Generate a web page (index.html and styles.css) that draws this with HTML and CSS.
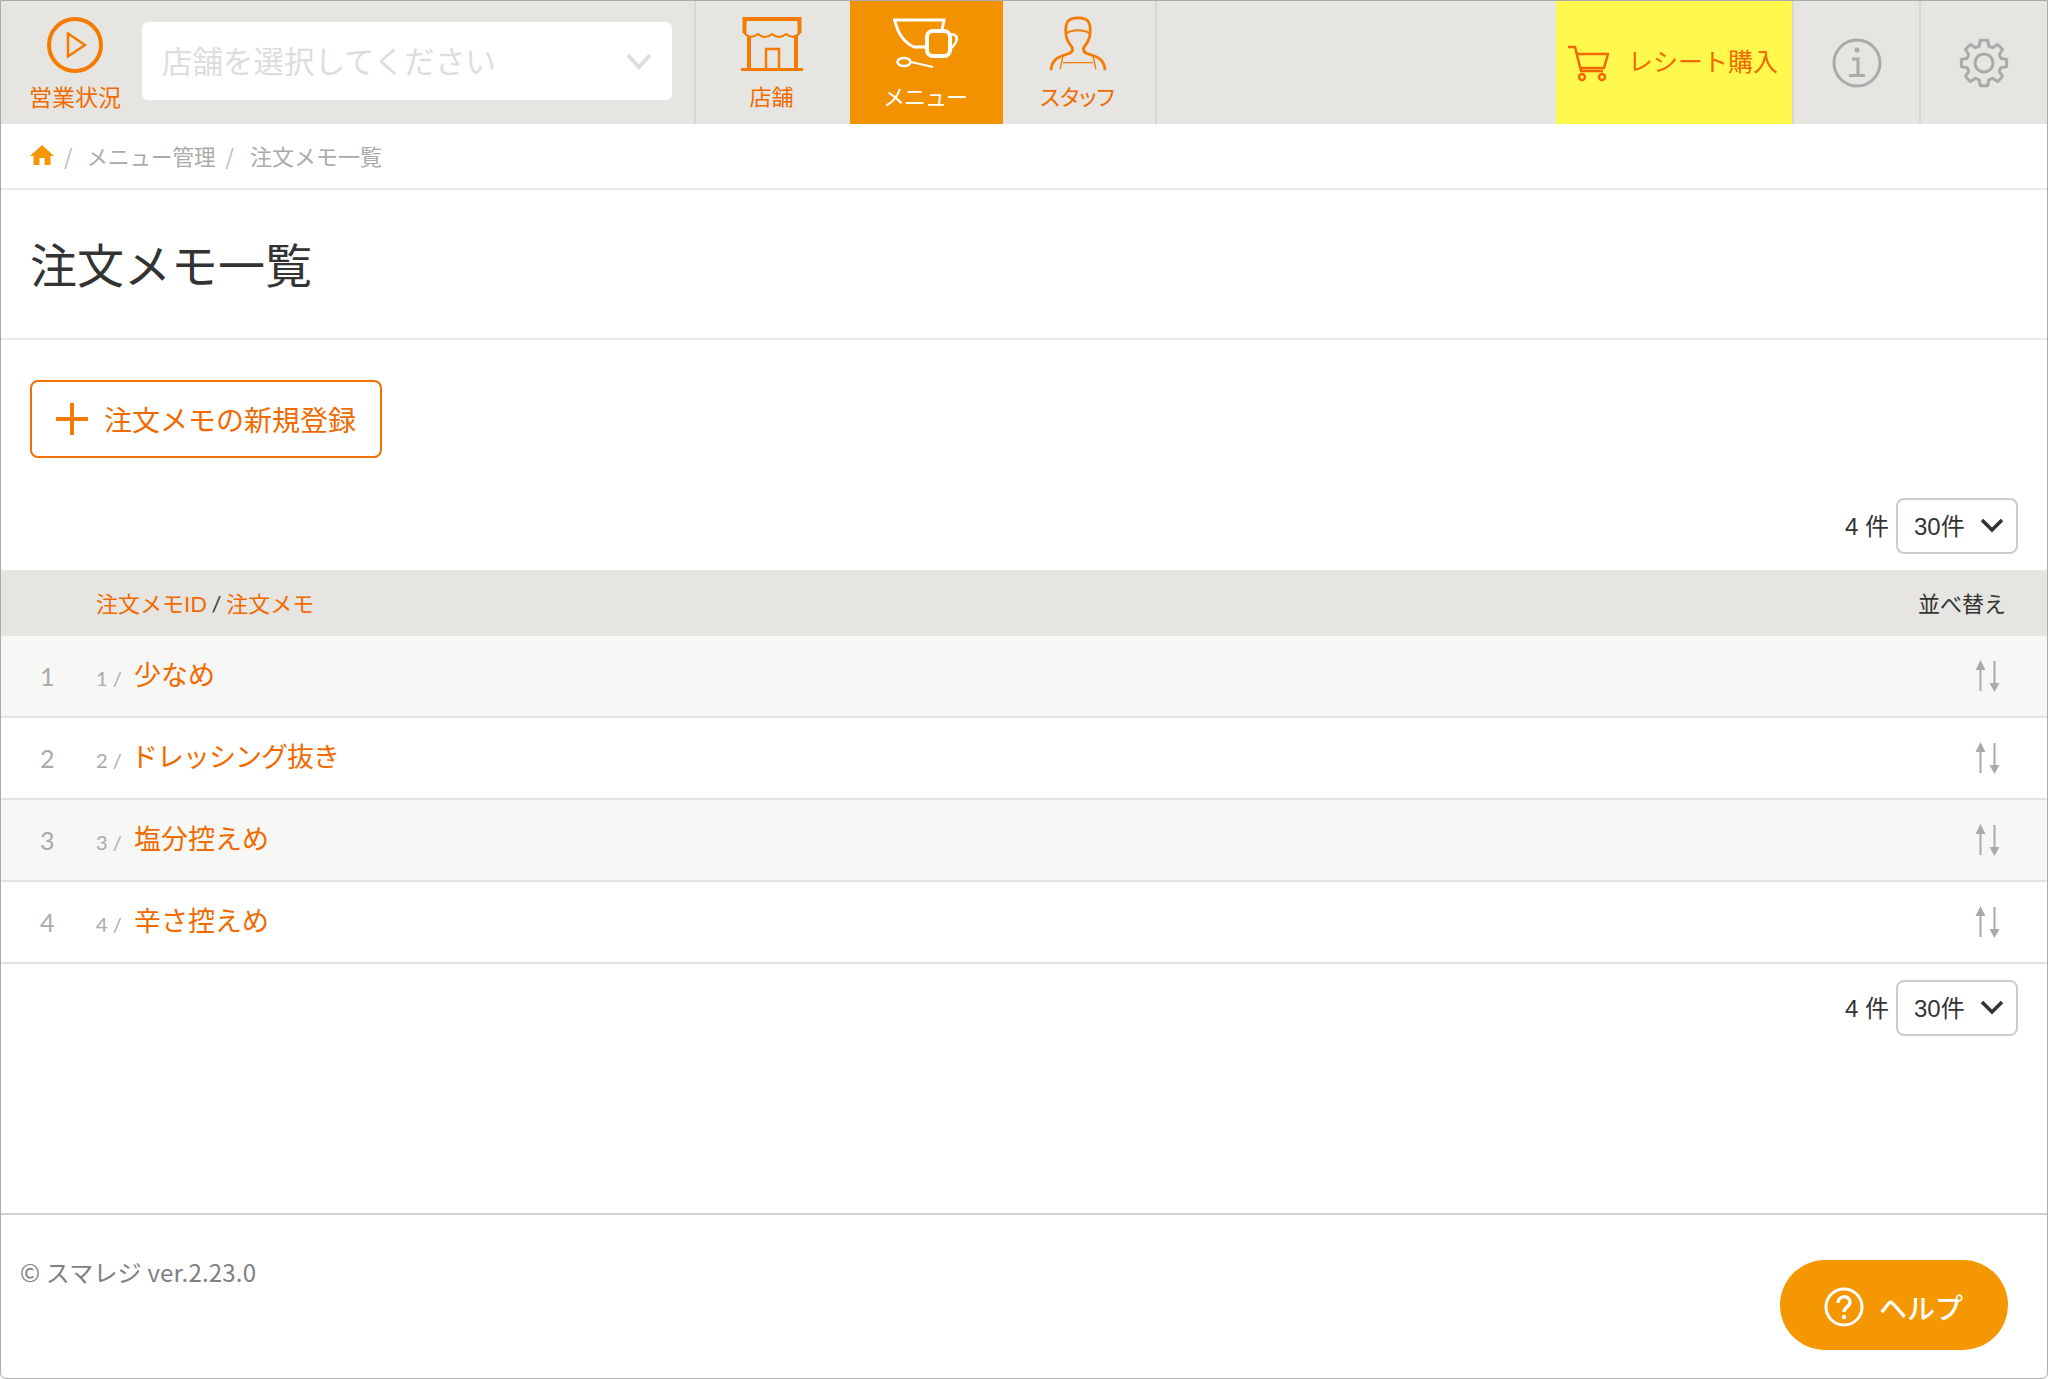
FILE: index.html
```html
<!DOCTYPE html>
<html lang="ja">
<head>
<meta charset="utf-8">
<title>注文メモ一覧</title>
<link rel="stylesheet" href="styles.css">
</head>
<body>
<div class="app">
  <header class="topbar">
    <a class="status">
      <svg class="status-icon" width="56" height="56" viewBox="0 0 56 56"><circle cx="28" cy="28" r="26" fill="none" stroke="#f47b00" stroke-width="4"/><path d="M21 16.500 L38 28 L21 39.500 Z" fill="none" stroke="#f47b00" stroke-width="2.500"/></svg>
      <span class="status-label">営業状況</span>
    </a>
    <div class="store-select">
      <span class="store-text">店舗を選択してください</span>
      <svg width="26" height="17" viewBox="0 0 26 17"><path d="M2 2 L13 14 L24 2" fill="none" stroke="#ddd" stroke-width="4"/></svg>
    </div>
    <nav class="tabs">
      <a class="tab">
        <svg width="62" height="56" viewBox="0 0 62 56" fill="none" stroke="#f47b00" stroke-width="3"><path d="M3.500 1 V17 M1.500 3 H60.500 M58.500 1 V17" stroke-width="4"/><path d="M3 17 Q10 24 17 18 Q24 24 31 18 Q38 24 45 18 Q52 24 59 17" stroke-width="2"/><path d="M8 20 V53 M55 20 V53" stroke-width="4"/><path d="M0 53.500 H62" stroke-width="3"/><path d="M25 53 V33 H38 V53" stroke-width="2.500"/></svg>
        <span>店舗</span>
      </a>
      <a class="tab tab-active">
        <svg width="70" height="56" viewBox="0 0 70 56" fill="none" stroke="#fff" stroke-width="3"><path d="M3 4 H54 L52 14"/><path d="M5 5 C8 18 15 27 24 31 H37"/><rect x="37" y="15" width="23" height="25" rx="6" stroke-width="4"/><path d="M60 19 C66 17 68 22 66 26 C64 30 62 32 59 34" stroke-width="2.500"/><ellipse cx="14" cy="46" rx="6.500" ry="4" stroke-width="2.500"/><path d="M21 46 L43 51" stroke-width="2"/></svg>
        <span class="tab-tight">メニュー</span>
      </a>
      <a class="tab">
        <svg width="62" height="60" viewBox="0 0 62 60" fill="none" stroke="#f47b00" stroke-width="3"><path d="M18 18 C17 6 21 2 31 2 C41 2 45 6 44 18 C44 26 40 30 37 34 C36 38 39 40 43 41 C53 44 59 47 60 58"/><path d="M18 18 C18 26 22 30 25 34 C26 38 23 40 19 41 C9 44 3 47 2 58"/><path d="M18 19 C25 14 37 14 44 19" stroke-width="2"/><path d="M15 42 L12 57 M47 42 L50 57 M15 50 H47" stroke-width="1.500"/></svg>
        <span class="tab-kana">スタッフ</span>
      </a>
    </nav>
    <div class="spacer"></div>
    <a class="receipt">
      <svg width="42" height="38" viewBox="0 0 42 38" fill="none" stroke="#f06a00" stroke-width="2.500"><path d="M1 3 H8 L14 27 H36"/><path d="M9 10 H41 L37 24 H13"/><circle cx="15" cy="33" r="3"/><circle cx="35" cy="33" r="3"/></svg>
      <span class="receipt-text">レシート購入</span>
    </a>
    <a class="icon-cell">
      <svg width="50" height="50" viewBox="0 0 50 50" fill="none" stroke="#aaa" stroke-width="3"><circle cx="25" cy="25" r="23"/><circle cx="25" cy="12" r="2.500" fill="#aaa" stroke="none"/><path d="M20 21 H26 V37 M17 37.500 H33" stroke-width="3"/></svg>
    </a>
    <a class="icon-cell icon-cell-last">
      <svg width="52" height="52" viewBox="-26 -26 52 52" fill="none" stroke="#aaa" stroke-width="3" stroke-linejoin="round"><polygon points="-4.800,-16.800 -3.600,-22.700 3.600,-22.700 4.800,-16.800 8.500,-15.300 13.500,-18.600 18.600,-13.500 15.300,-8.500 16.800,-4.800 22.700,-3.600 22.700,3.600 16.800,4.800 15.300,8.500 18.600,13.500 13.500,18.600 8.500,15.300 4.800,16.800 3.600,22.700 -3.600,22.700 -4.800,16.800 -8.500,15.300 -13.500,18.600 -18.600,13.500 -15.300,8.500 -16.800,4.800 -22.700,3.600 -22.700,-3.600 -16.800,-4.800 -15.300,-8.500 -18.600,-13.500 -13.500,-18.600 -8.500,-15.300"/><circle cx="0" cy="0" r="9"/></svg>
    </a>
  </header>

  <div class="crumbs">
    <svg width="24" height="20" viewBox="0 0 24 20"><path d="M12 0 L24 11 H20.500 V20 H14.500 V13 H9.500 V20 H3.500 V11 H0 Z" fill="#f59700"/></svg>
    <span class="crumb-sep">/</span>
    <span>メニュー管理</span>
    <span class="crumb-sep crumb-sep-last">/</span>
    <span class="crumb-current">注文メモ一覧</span>
  </div>

  <h1 class="title">注文メモ一覧</h1>

  <main class="main">
    <a class="add-btn">
      <svg width="32" height="32" viewBox="0 0 32 32"><path d="M16 0 V32 M0 16 H32" stroke="#f47b00" stroke-width="4"/></svg>
      <span>注文メモの新規登録</span>
    </a>

    <div class="pager pager-top">
      <span class="count">4 件</span>
      <div class="per-page"><span class="per-text">30件</span><svg width="24" height="15" viewBox="0 0 24 15"><path d="M2 2 L12 12 L22 2" fill="none" stroke="#333" stroke-width="3.500"/></svg></div>
    </div>

    <div class="thead">
      <div class="thead-title"><span class="link">注文メモID</span> / <span class="link">注文メモ</span></div>
      <div class="thead-sort">並べ替え</div>
    </div>

    <div class="row row-odd">
      <span class="num">1</span><span class="rid">1 /</span><span class="name">少なめ</span>
      <svg class="sort" width="26" height="34" viewBox="0 0 26 34"><path d="M5.500 4 V32 M19.500 2 V28" stroke="#aaa" stroke-width="2"/><path d="M0.500 11 L5.500 1 L10.500 11 Z M14.500 24 H24.500 L19.500 33 Z" fill="#aaa"/></svg>
    </div>
    <div class="row">
      <span class="num">2</span><span class="rid">2 /</span><span class="name name-kana">ドレッシング抜き</span>
      <svg class="sort" width="26" height="34" viewBox="0 0 26 34"><path d="M5.500 4 V32 M19.500 2 V28" stroke="#aaa" stroke-width="2"/><path d="M0.500 11 L5.500 1 L10.500 11 Z M14.500 24 H24.500 L19.500 33 Z" fill="#aaa"/></svg>
    </div>
    <div class="row row-odd">
      <span class="num">3</span><span class="rid">3 /</span><span class="name">塩分控えめ</span>
      <svg class="sort" width="26" height="34" viewBox="0 0 26 34"><path d="M5.500 4 V32 M19.500 2 V28" stroke="#aaa" stroke-width="2"/><path d="M0.500 11 L5.500 1 L10.500 11 Z M14.500 24 H24.500 L19.500 33 Z" fill="#aaa"/></svg>
    </div>
    <div class="row">
      <span class="num">4</span><span class="rid">4 /</span><span class="name">辛さ控えめ</span>
      <svg class="sort" width="26" height="34" viewBox="0 0 26 34"><path d="M5.500 4 V32 M19.500 2 V28" stroke="#aaa" stroke-width="2"/><path d="M0.500 11 L5.500 1 L10.500 11 Z M14.500 24 H24.500 L19.500 33 Z" fill="#aaa"/></svg>
    </div>

    <div class="pager pager-bottom">
      <span class="count">4 件</span>
      <div class="per-page"><span class="per-text">30件</span><svg width="24" height="15" viewBox="0 0 24 15"><path d="M2 2 L12 12 L22 2" fill="none" stroke="#333" stroke-width="3.500"/></svg></div>
    </div>
  </main>

  <footer class="footer">
    <span class="copyright">© スマレジ ver.2.23.0</span>
    <a class="help">
      <svg width="40" height="40" viewBox="0 0 40 40" fill="none" stroke="#fff" stroke-width="3"><circle cx="20" cy="20" r="18"/><path d="M14 16 C14 8 26 8 26 15 C26 20 20 20 20 25" stroke-width="3.500"/><circle cx="20" cy="30" r="2.200" fill="#fff" stroke="none"/></svg>
      <span>ヘルプ</span>
    </a>
  </footer>
</div>
</body>
</html>
```
FILE: styles.css
```css
* { box-sizing: border-box; }
html, body { margin: 0; padding: 0; background: #fff; }
body { font-family: "Noto Sans CJK JP", "Liberation Sans", sans-serif; color: #333; }
.app {
  width: 2048px; height: 1379px;
  border: 1px solid #aaa; border-radius: 0 0 6px 6px;
  display: flex; flex-direction: column; overflow: hidden;
}

/* top bar */
.topbar { height: 123px; flex: none; display: flex; background: #e6e5e1; }
.status { width: 141px; flex: none; padding: 16px 22px 0 29px; display: flex; flex-direction: column; align-items: center; color: #f06a00; }
.status-label { font-size: 23px; line-height: 26px; margin-top: 10px; white-space: nowrap; }
.status-icon { display: block; }
.store-select {
  width: 530px; height: 78px; margin-top: 21px; background: #fff; border-radius: 6px; flex: none;
  display: flex; align-items: center; justify-content: space-between; padding: 0 20px 0 20px;
  font-size: 30.500px; color: #ddd;
}
.store-text { padding-bottom: 2px; }
.tabs { display: flex; margin-left: 22px; border-left: 2px solid #d6d6d6; border-right: 2px solid #d6d6d6; flex: none; }
.tab { width: 153px; display: flex; flex-direction: column; align-items: center; color: #f06a00; font-size: 22px; line-height: 26px; padding: 15px 3px 0 0; }
.tab:first-child { width: 154px; }
.tab:last-child { width: 152px; }
.tab svg { height: 56px; display: block; }
.tab span { margin-top: 10px; }
.tab-kana { font-feature-settings: "palt"; }
.tab-tight { letter-spacing: -1px; }
.tab-active { background: #f39200; color: #fff; }
.spacer { flex: 1; }
.receipt { width: 236px; flex: none; background: #fff94d; display: flex; align-items: center; padding-left: 11px; color: #f06a00; font-size: 25px; gap: 19px; white-space: nowrap; }
.receipt-text { padding-bottom: 6px; }
.icon-cell { width: 127px; flex: none; border-left: 2px solid #d6d6d6; display: flex; align-items: center; justify-content: center; }
.icon-cell-last { width: 128px; }

/* breadcrumbs */
.crumbs { height: 66px; flex: none; border-bottom: 2px solid #e8e8e8; display: flex; align-items: center; padding: 0 0 2px 29px; font-size: 21.500px; color: #aaa; }
.crumb-sep { margin: 0 14px 0 10px; color: #bbb; }
.crumb-sep-last { margin-right: 16px; }
.crumb-current { font-size: 22px; }

/* title */
.title { height: 150px; margin: 0; flex: none; border-bottom: 2px solid #e8e8e8; padding: 0 0 4px 29px; display: flex; align-items: center; font-size: 47px; font-weight: 400; color: #333; }

/* main */
.main { flex: 1; display: flex; flex-direction: column; }
.add-btn {
  margin: 40px 0 0 29px; width: 352px; height: 78px; flex: none;
  border: 2px solid #f07000; border-radius: 8px; display: flex; align-items: center; padding-left: 24px; gap: 16px;
  color: #f06a00; font-size: 28px;
}
.pager { display: flex; justify-content: flex-end; align-items: center; padding-right: 29px; gap: 7px; flex: none; font-family: "Liberation Sans", "Noto Sans CJK JP", sans-serif; }
.pager-top { margin-top: 40px; }
.pager-bottom { margin-top: 16px; }
.count { font-size: 24px; color: #333; padding-bottom: 4px; }
.per-page { width: 122px; height: 56px; border: 2px solid #ccc; border-radius: 8px; display: flex; align-items: center; justify-content: space-between; padding: 0 12px 2px 16px; font-size: 24px; color: #333; }
.per-text { padding-bottom: 2px; }
.thead { margin-top: 16px; height: 66px; flex: none; background: #e6e5e1; display: flex; align-items: center; justify-content: space-between; padding: 0 41px 2px 95px; font-size: 22px; color: #333; }
.link { color: #f06a00; }
.thead-title { font-family: "Lato", "Noto Sans CJK JP", sans-serif; word-spacing: -1px; }
.row { height: 82px; flex: none; display: flex; align-items: center; border-bottom: 2px solid #e3e3e3; padding-right: 46px; }
.row-odd { background: #f7f7f5; }
.num { width: 95px; padding-left: 39px; font-family: "Lato", sans-serif; font-size: 25px; color: #aaa; flex: none; }
.rid { width: 38px; font-family: "Lato", sans-serif; font-size: 20px; color: #aaa; flex: none; padding-top: 4px; }
.name { font-size: 27px; color: #f06a00; flex: 1; padding-bottom: 5px; }
.name-kana { margin-left: -3px; letter-spacing: -1px; }
.sort { display: block; flex: none; }

/* footer */
.footer { height: 165px; flex: none; border-top: 2px solid #d0d0d0; display: flex; justify-content: space-between; align-items: flex-start; padding: 45px 39px 0 19px; }
.copyright { font-family: "Noto Sans CJK JP", sans-serif; font-size: 24px; letter-spacing: 0.200px; color: #808080; line-height: 28px; margin-top: -2px; }
.help { width: 228px; height: 90px; border-radius: 45px; background: #f59700; color: #fff; display: flex; align-items: center; padding: 4px 0 0 44px; gap: 15px; font-size: 28px; font-weight: 500; }
```
